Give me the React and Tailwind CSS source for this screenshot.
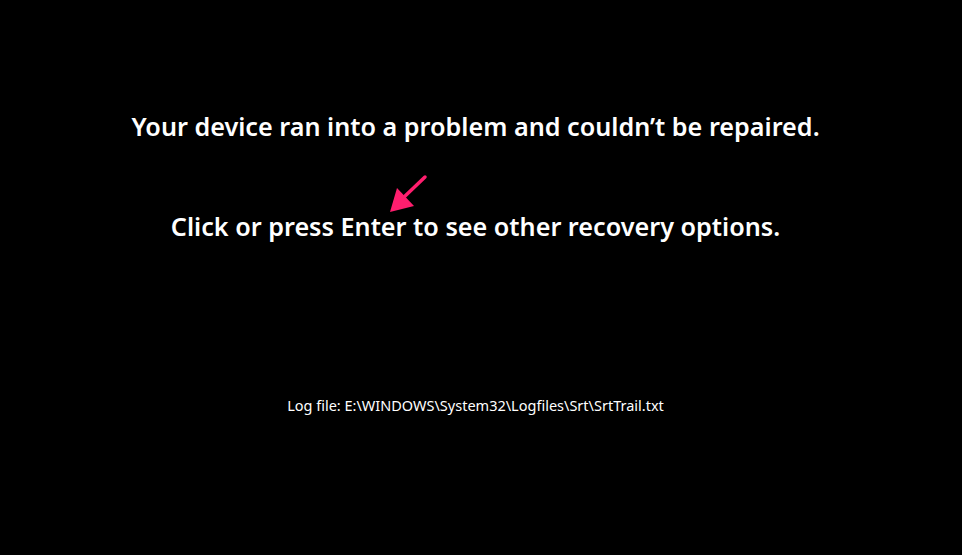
import React from 'react';

const Arrow = () => (
  <svg className="absolute left-[388px] top-[174px]" width="42" height="42" viewBox="0 0 42 42" fill="none">
    <line x1="37" y1="3" x2="15" y2="24" stroke="#ff1e6e" strokeWidth="3.5" strokeLinecap="round" />
    <polygon points="2,38 9,14 26,32" fill="#ff1e6e" />
  </svg>
);

export default function App() {
  return (
    <div className="relative w-[962px] h-[555px] bg-black text-white overflow-hidden" style={{ fontFamily: '"Noto Sans", "Open Sans", sans-serif' }}>
      <div className="flex flex-col items-center pt-[109px] pr-[11px]">
        <p className="text-[25.2px] font-semibold leading-[34px]">
          Your device ran into a problem and couldn’t be repaired.
        </p>
        <p className="mt-[66px] text-[25.2px] font-semibold leading-[34px]">
          Click or press Enter to see other recovery options.
        </p>
        <p className="mt-[152px] text-[14.5px] leading-[20px]">
          Log file: E:\WINDOWS\System32\Logfiles\Srt\SrtTrail.txt
        </p>
      </div>
      <Arrow />
    </div>
  );
}
